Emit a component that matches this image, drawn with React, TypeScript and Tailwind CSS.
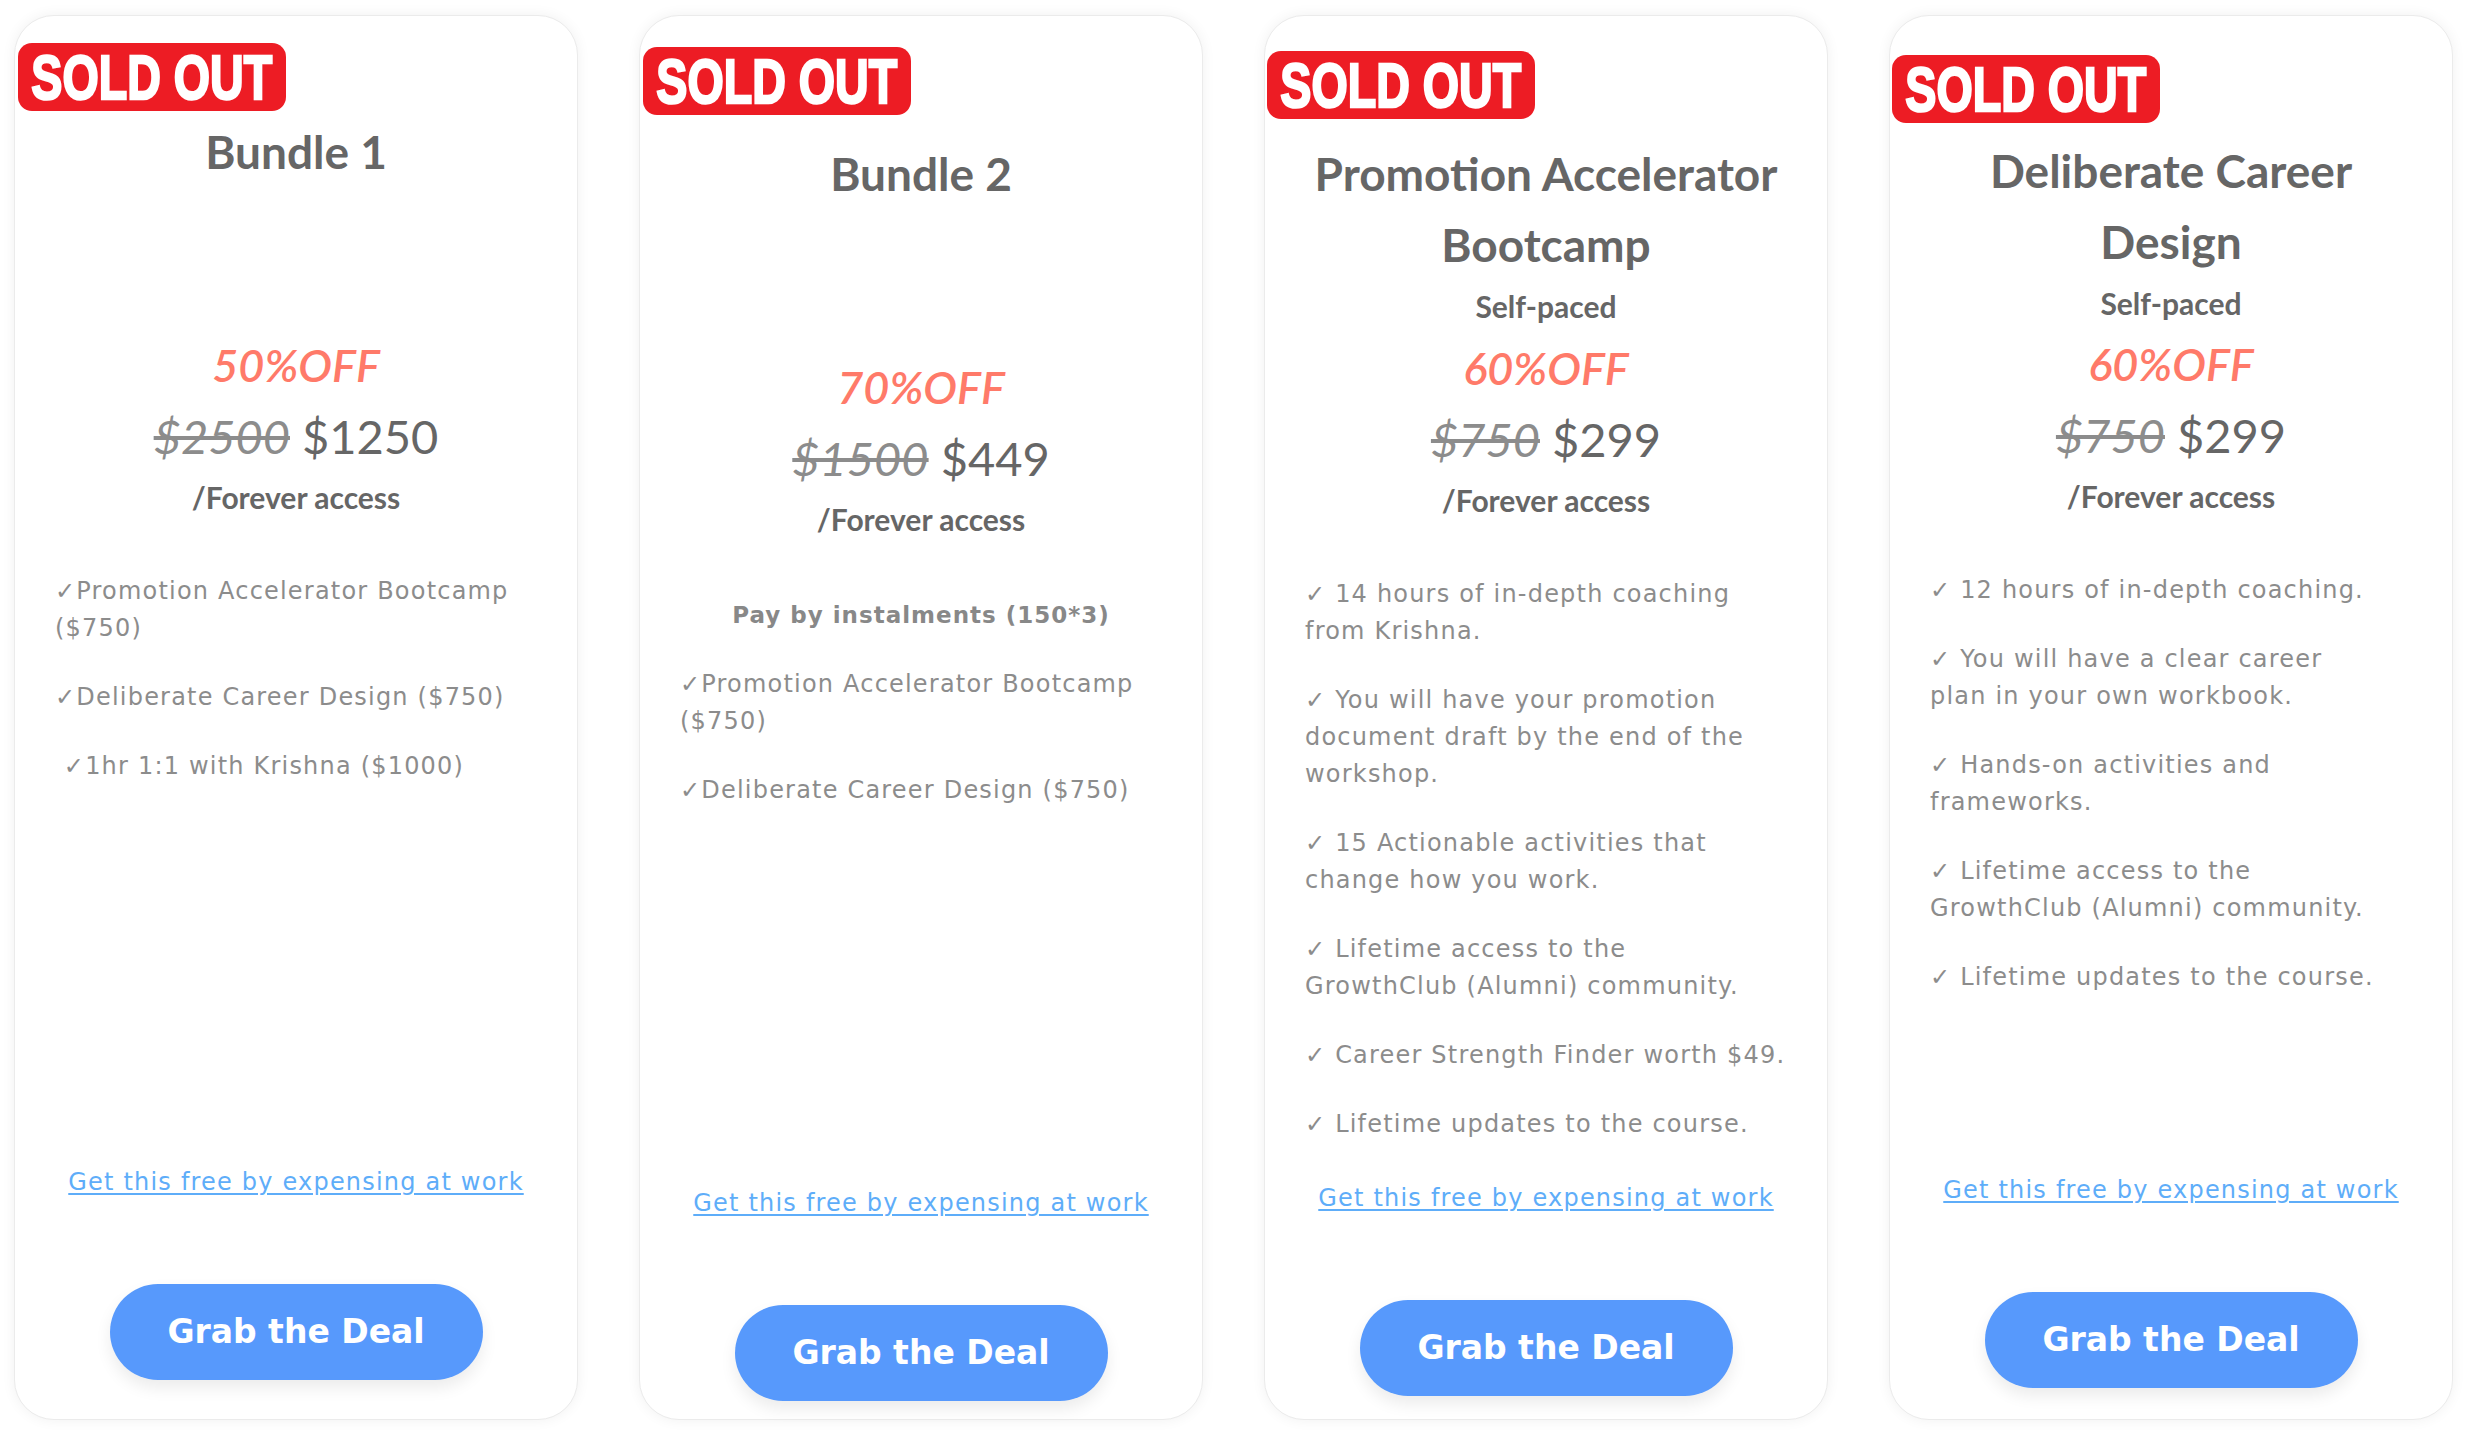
import React from 'react';

type Plan = {
    title: string[];
    subtitle?: string;
    discount: string;
    was: string;
    now: string;
    note?: string;
    features: string[][];
    // per-card spacing, the four cards do not line up exactly
    pt: string;
    pb: string;
    discountMt: string;
    badge: string;
};

const plans: Plan[] = [
    {
        title: ['Bundle 1'],
        discount: '50%OFF',
        was: '$2500',
        now: '$1250',
        features: [
            ['✓Promotion Accelerator Bootcamp', '($750)'],
            ['✓Deliberate Career Design ($750)'],
            ['\u00a0✓1hr 1:1 with Krishna ($1000)'],
        ],
        pt: 'pt-[100px]',
        pb: 'pb-[39px]',
        discountMt: 'mt-[150px]',
        badge: 'left-[3px] top-[27px]',
    },
    {
        title: ['Bundle 2'],
        discount: '70%OFF',
        was: '$1500',
        now: '$449',
        note: 'Pay by instalments (150*3)',
        features: [
            ['✓Promotion Accelerator Bootcamp', '($750)'],
            ['✓Deliberate Career Design ($750)'],
        ],
        pt: 'pt-[122px]',
        pb: 'pb-[18px]',
        discountMt: 'mt-[150px]',
        badge: 'left-[3px] top-[31px]',
    },
    {
        title: ['Promotion Accelerator', 'Bootcamp'],
        subtitle: 'Self-paced',
        discount: '60%OFF',
        was: '$750',
        now: '$299',
        features: [
            ['✓ 14 hours of in-depth coaching', 'from Krishna.'],
            ['✓ You will have your promotion', 'document draft by the end of the', 'workshop.'],
            ['✓ 15 Actionable activities that', 'change how you work.'],
            ['✓ Lifetime access to the', 'GrowthClub (Alumni) community.'],
            ['✓ Career Strength Finder worth $49.'],
            ['✓ Lifetime updates to the course.'],
        ],
        pt: 'pt-[122px]',
        pb: 'pb-[23px]',
        discountMt: 'mt-[14px]',
        badge: 'left-[2px] top-[35px]',
    },
    {
        title: ['Deliberate Career', 'Design'],
        subtitle: 'Self-paced',
        discount: '60%OFF',
        was: '$750',
        now: '$299',
        features: [
            ['✓ 12 hours of in-depth coaching.'],
            ['✓ You will have a clear career', 'plan in your own workbook.'],
            ['✓ Hands-on activities and', 'frameworks.'],
            ['✓ Lifetime access to the', 'GrowthClub (Alumni) community.'],
            ['✓ Lifetime updates to the course.'],
        ],
        pt: 'pt-[119px]',
        pb: 'pb-[31px]',
        discountMt: 'mt-[13px]',
        badge: 'left-[2px] top-[39px]',
    },
];

function PlanCard({ plan }: { plan: Plan }) {
    return (
        <div className={`relative flex h-[1405px] w-[564px] shrink-0 flex-col rounded-[40px] border border-[#ebebeb] bg-white px-[40px] shadow-[0_0_14px_rgba(0,0,0,0.06)] ${plan.pt} ${plan.pb}`}>
            {/* badge */}
            <div className={`absolute flex h-[68px] w-[268px] items-center justify-center overflow-hidden rounded-[14px] bg-[#ed1c24] ${plan.badge}`}>
                <span className="inline-block scale-x-[0.74] whitespace-nowrap font-['Liberation_Sans',sans-serif] text-[63px] font-bold leading-none tracking-[0px] text-white [-webkit-text-stroke:2.5px_white]">
                    SOLD OUT
                </span>
            </div>

            <div className="font-['Lato',sans-serif] text-center text-[#666666]">
                <h2 className="text-[46px] font-bold leading-[71px]">
                    {plan.title.map((line) => (
                        <span key={line} className="block">{line}</span>
                    ))}
                </h2>
                {plan.subtitle && (
                    <p className="mt-[6px] text-[30px] font-bold leading-[40px]">{plan.subtitle}</p>
                )}
                <p className={`${plan.discountMt} text-[45px] font-semibold italic leading-[56px] text-[#ff7a69]`}>
                    {plan.discount}
                </p>
                <p className="mt-[15px] text-[47px] leading-[56px]">
                    <span className="italic text-[#8c8c8c] line-through decoration-[#8c8c8c]">{plan.was}</span> {plan.now}
                </p>
                <p className="mt-[13px] text-[30px] font-bold leading-[40px]">/Forever access</p>
            </div>

            <div className="font-['DejaVu_Sans',sans-serif] text-[24px] leading-[37px] tracking-[1.2px] text-[#8c8c8c]">
                {plan.note && (
                    <p className="mt-[58px] text-center text-[23px] font-bold tracking-[1px] text-[#888888]">{plan.note}</p>
                )}
                <ul className={`${plan.note ? 'mt-[32px]' : 'mt-[56px]'} space-y-[32px]`}>
                    {plan.features.map((lines, i) => (
                        <li key={i}>
                            {lines.map((line) => (
                                <span key={line} className="block whitespace-nowrap">{line}</span>
                            ))}
                        </li>
                    ))}
                </ul>
            </div>

            <div className="flex-1" />

            <a href="#" className="mt-[32px] text-center font-['DejaVu_Sans',sans-serif] text-[24px] leading-[37px] tracking-[1.2px] text-[#5eadf9] underline underline-offset-[3px]">
                Get this free by expensing at work
            </a>

            <button className="mx-auto mt-[83px] h-[96px] w-[373px] shrink-0 rounded-full bg-[#5799fc] font-['DejaVu_Sans',sans-serif] text-[33px] font-bold text-white shadow-[0_8px_16px_rgba(0,0,0,0.08)]">
                Grab the Deal
            </button>
        </div>
    );
}

export default function App() {
    return (
        <div className="min-h-screen bg-white">
            <div className="flex gap-[61px] pl-[14px] pt-[15px]">
                {plans.map((plan) => (
                    <PlanCard key={plan.title.join(' ')} plan={plan} />
                ))}
            </div>
        </div>
    );
}
